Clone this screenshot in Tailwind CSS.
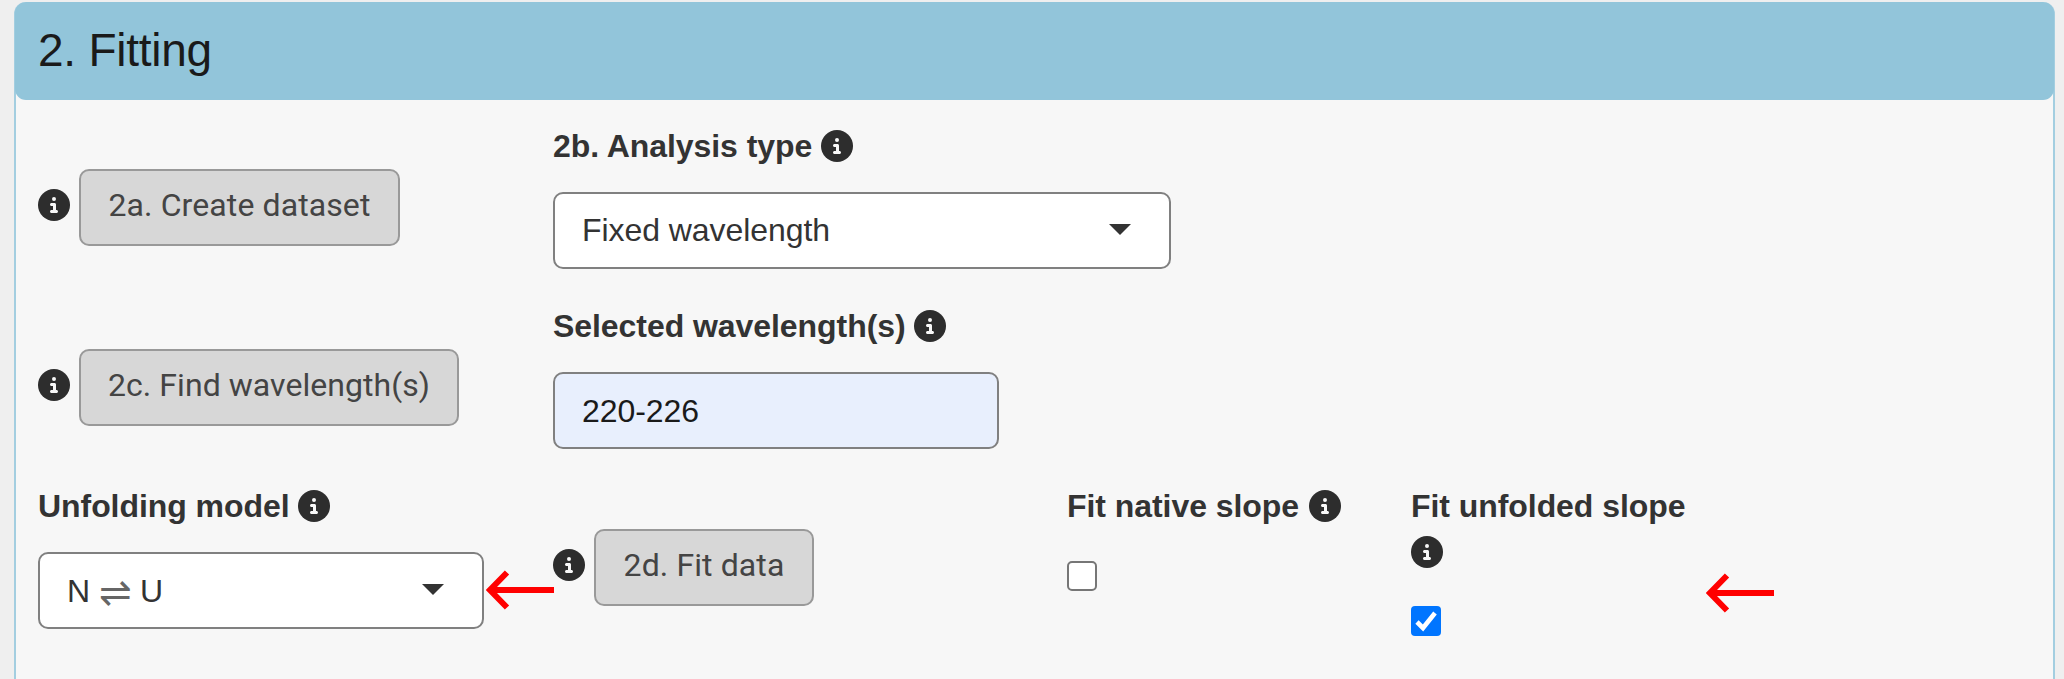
<!DOCTYPE html>
<html lang="en">
<head>
<meta charset="utf-8">
<title>Fitting</title>
<script src="https://cdn.jsdelivr.net/npm/@tailwindcss/browser@4"></script>
</head>
<body class="bg-[#efefef] font-['Liberation_Sans',Arial,sans-serif] text-[32px] leading-[46px] tracking-[-0.06px] text-[#333]">
<svg class="hidden">
  <symbol id="info" viewBox="0 0 512 512"><path fill="#2d2d2d" d="M256 0a256 256 0 1 0 0 512a256 256 0 1 0 0-512z"/><path fill="#f7f7f7" d="M216 336h24v-64h-24c-13 0-24-11-24-24s11-24 24-24h48c13 0 24 11 24 24v88h8c13 0 24 11 24 24s-11 24-24 24h-80c-13 0-24-11-24-24s11-24 24-24zM256 128a32 32 0 1 1 0 64a32 32 0 1 1 0-64z"/></symbol>
  <symbol id="arrow" viewBox="0 0 70 40"><path d="M4 20H68M21 2.500L4 20L21 37.500" fill="none" stroke="#f00" stroke-width="6"/></symbol>
</svg>
<main class="relative h-[679px] overflow-hidden pt-[2px] pl-[14px] pr-[9px]">
  <section class="h-[700px] rounded-t-[12px] border-2 border-t-0 border-[#a3cee0] bg-[#f7f7f7]">
    <header class="-mx-px flex h-[98px] items-center rounded-[11px] bg-[#92c5da] pb-[2px] pl-[23px] text-[46px] leading-[50px] tracking-[-0.25px] text-[#1a1a1a]"><h1>2. Fitting</h1></header>
    <div class="grid grid-cols-[515px_514px_344px_1fr] grid-rows-[180px_180px_216px] pt-[23px] pl-[22px]">
      <div class="flex items-start gap-[9px] pt-[46px]">
        <svg class="mt-[20px] size-8"><use href="#info"/></svg>
        <button class="h-[77px] w-[321px] rounded-[10px] border-2 border-[#999] bg-[#d7d7d7] pb-[6px] font-[Roboto,sans-serif] tracking-[0.1px] text-[#444]"><span class="whitespace-nowrap">2a. Create dataset</span></button>
      </div>
      <div>
        <label class="flex items-center gap-[9px] font-bold">2b. Analysis type <svg class="size-8"><use href="#info"/></svg></label>
        <div class="mt-[23px] flex h-[77px] w-[618px] items-center justify-between rounded-[10px] border-2 border-[#808080] bg-white pr-[38px] pb-px pl-[27px]">Fixed wavelength<svg class="mb-px h-[11px] w-[22px]" viewBox="0 0 22 11"><path fill="#333" d="M0 0H22L11 11Z"/></svg></div>
      </div>
      <div></div><div></div>
      <div class="flex items-start gap-[9px] pt-[46px]">
        <svg class="mt-[20px] size-8"><use href="#info"/></svg>
        <button class="h-[77px] w-[380px] rounded-[10px] border-2 border-[#999] bg-[#d7d7d7] pb-[6px] font-[Roboto,sans-serif] tracking-[0.05px] text-[#444]"><span class="whitespace-nowrap">2c. Find wavelength(s)</span></button>
      </div>
      <div>
        <label class="flex items-center gap-[8px] font-bold">Selected wavelength(s) <svg class="size-8"><use href="#info"/></svg></label>
        <div class="mt-[23px] flex h-[77px] w-[446px] items-center rounded-[10px] border-2 border-[#808080] bg-[#e8effd] pl-[27px] text-[#1a1a1a]">220-226</div>
      </div>
      <div></div><div></div>
      <div>
        <label class="flex items-center gap-[8px] font-bold">Unfolding model <svg class="size-8"><use href="#info"/></svg></label>
        <div class="mt-[23px] flex h-[77px] w-[446px] items-center justify-between rounded-[10px] border-2 border-[#808080] bg-white pr-[38px] pl-[27px]"><span class="flex h-[46px] items-center whitespace-nowrap">N<span class="mt-[3px] ml-[7px] mr-[7px] inline-block w-[36px] text-center font-['DejaVu_Sans',sans-serif] text-[39px] leading-none font-light text-[#666]">⇌</span>U</span><svg class="mb-[2px] h-[11px] w-[22px]" viewBox="0 0 22 11"><path fill="#333" d="M0 0H22L11 11Z"/></svg></div>
      </div>
      <div class="flex items-start gap-[9px] pt-[46px]">
        <svg class="mt-[20px] size-8"><use href="#info"/></svg>
        <button class="h-[77px] w-[220px] rounded-[10px] border-2 border-[#999] bg-[#d7d7d7] pb-[6px] font-[Roboto,sans-serif] tracking-[0.1px] text-[#444]"><span class="whitespace-nowrap">2d. Fit data</span></button>
      </div>
      <div>
        <label class="flex items-center gap-[10px] font-bold">Fit native slope <svg class="size-8"><use href="#info"/></svg></label>
        <span class="mt-[32px] block size-[30px] rounded-[5px] border-2 border-[#767676] bg-white"></span>
      </div>
      <div>
        <label class="block font-bold">Fit unfolded slope <svg class="mt-[7px] size-8"><use href="#info"/></svg></label>
        <span class="mt-[38px] block size-[30px] rounded-[4px] bg-[#0075ff]"><svg viewBox="0 0 30 30"><path d="M6 16L12 22L24 7" fill="none" stroke="#fff" stroke-width="4.6"/></svg></span>
      </div>
    </div>
  </section>
  <svg class="absolute top-[570px] left-[486px] h-[40px] w-[70px]"><use href="#arrow"/></svg>
  <svg class="absolute top-[573px] left-[1706px] h-[40px] w-[70px]"><use href="#arrow"/></svg>
</main>
</body>
</html>
